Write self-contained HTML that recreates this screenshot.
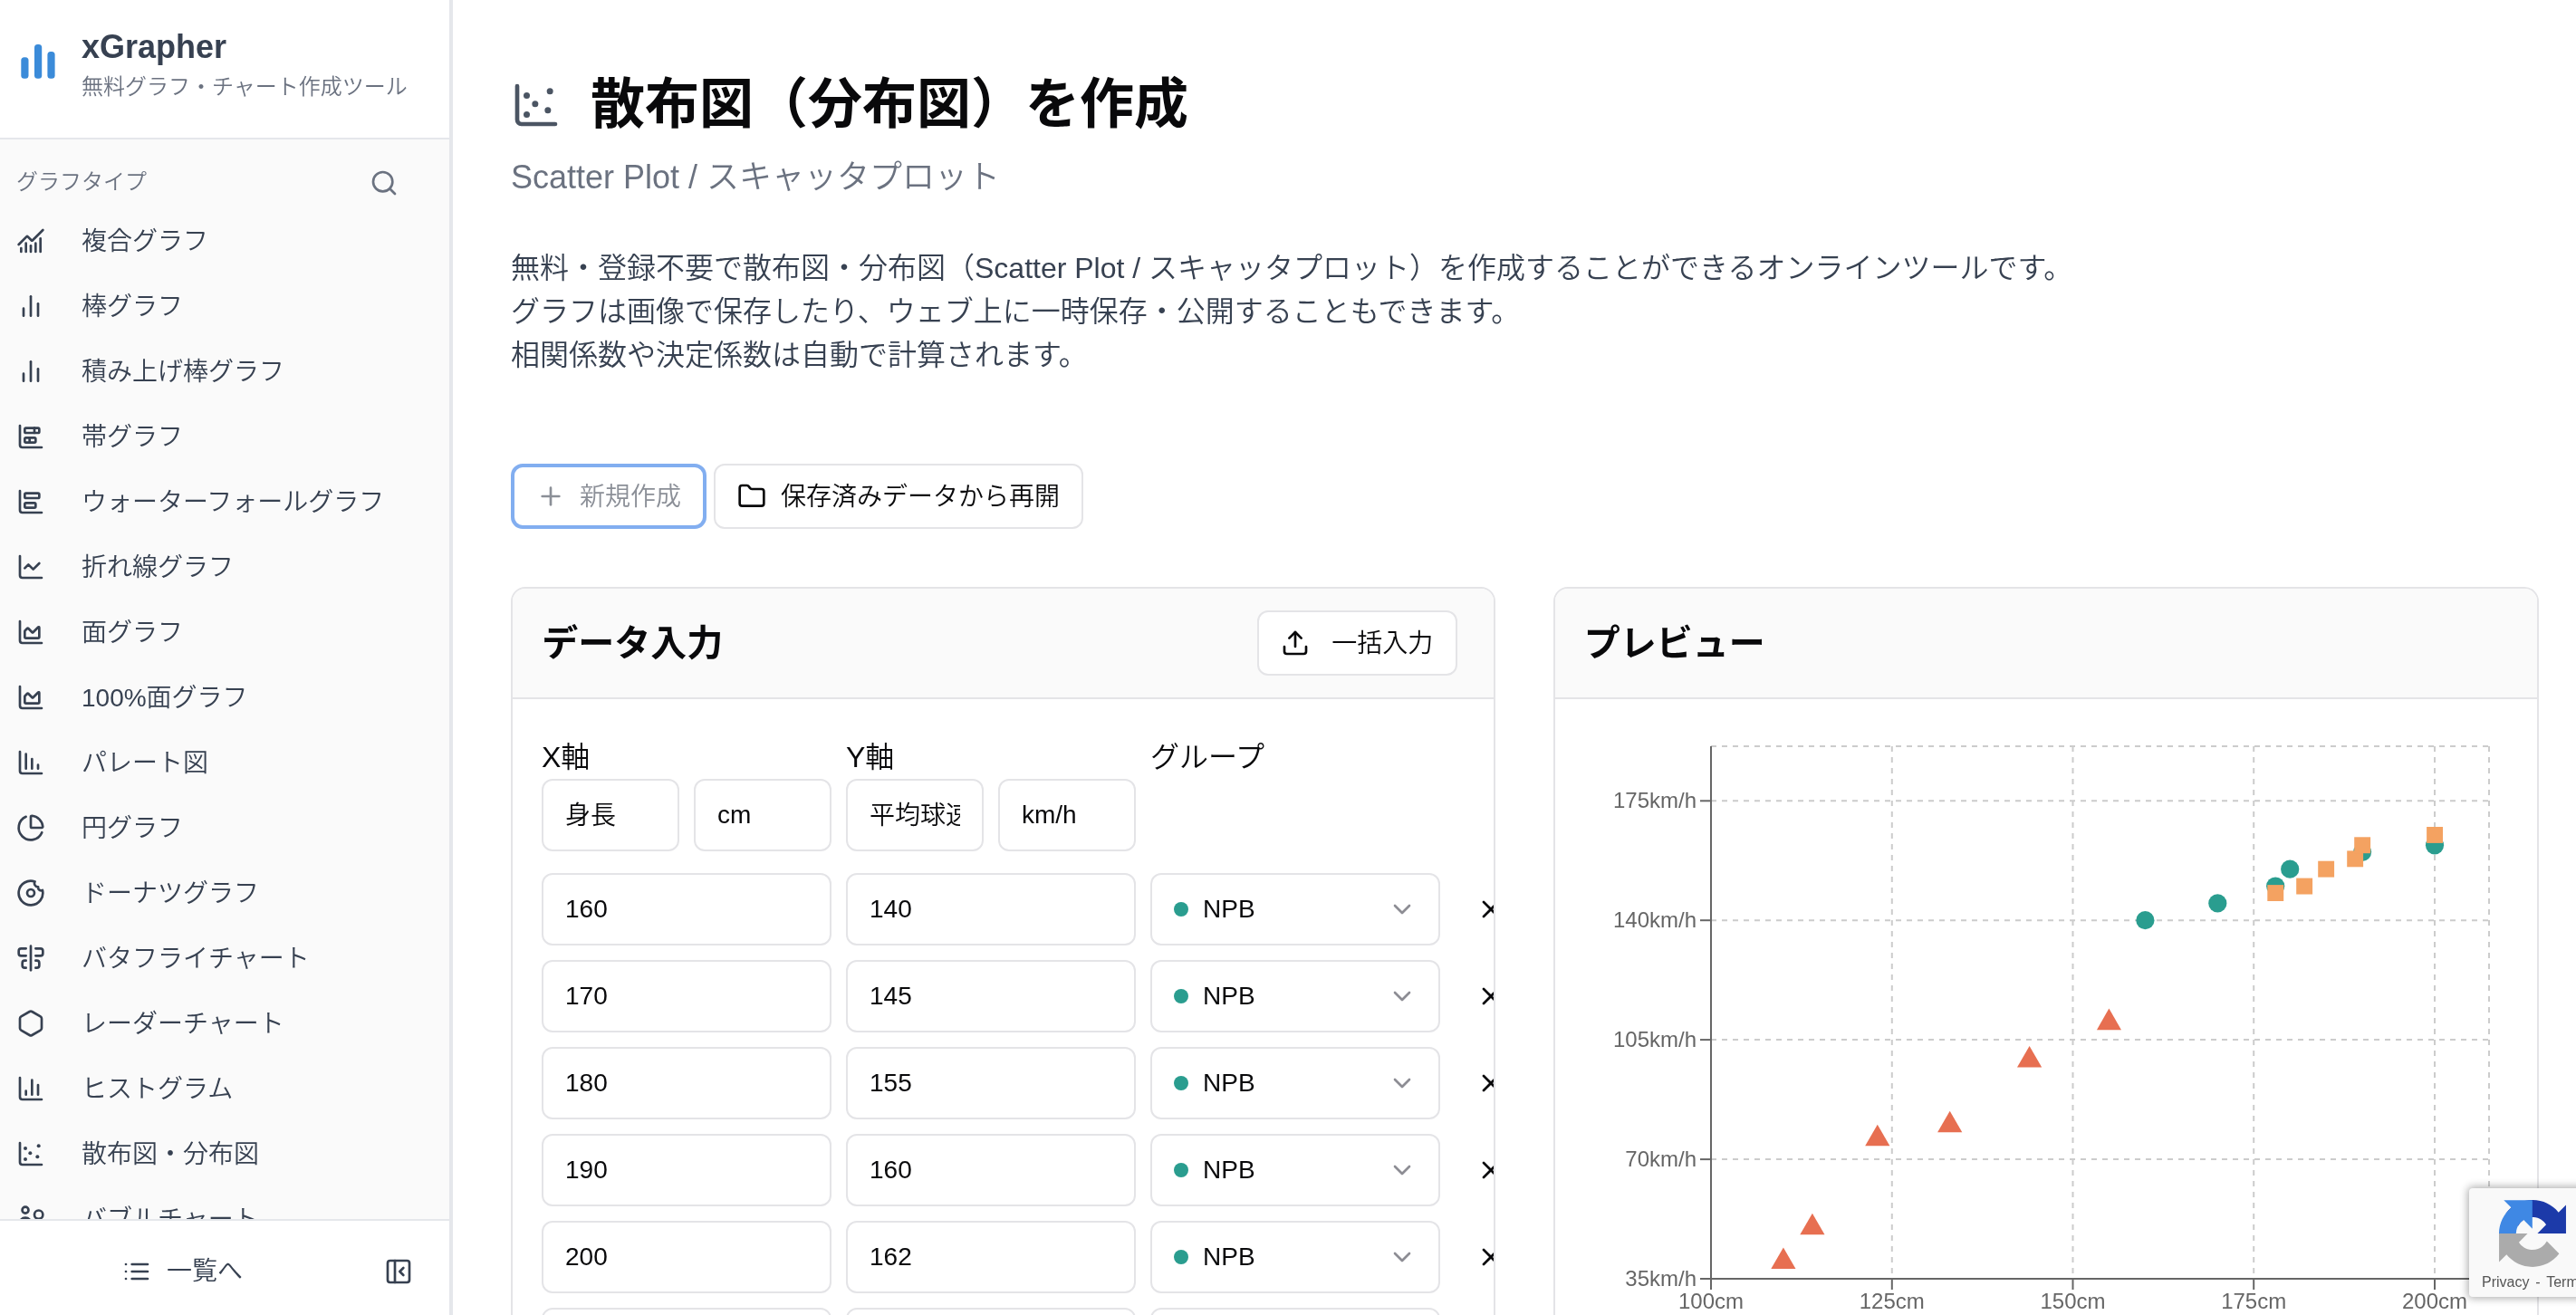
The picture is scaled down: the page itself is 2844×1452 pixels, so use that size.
<!DOCTYPE html>
<html lang="ja"><head><meta charset="utf-8"><title>散布図（分布図）を作成 | xGrapher</title>
<style>
*{box-sizing:border-box;margin:0;padding:0}
html,body{width:2844px;height:1452px;overflow:hidden;background:#fff}
body{font-family:"Liberation Sans","Noto Sans CJK JP",sans-serif;color:#09090b;font-weight:350}
#z{zoom:2;will-change:transform;opacity:.9999;position:relative;width:1422px;height:726px;overflow:hidden;background:#fff}
.ic{display:block;flex:none}
#side{position:absolute;left:0;top:0;width:250px;height:726px;border-right:2px solid #e5e7eb;background:#fafafa;overflow:hidden}
#shead{position:absolute;left:0;top:0;width:248px;height:77px;background:#fff;border-bottom:1px solid #e5e7eb}
#shead .t{position:absolute;left:45px;top:14px;font-size:18px;font-weight:700;color:#374151;line-height:24px;white-space:nowrap}
#shead .s{position:absolute;left:45px;top:40px;font-size:12px;color:#6b7280;line-height:16px;white-space:nowrap}
.glabel{position:absolute;left:9px;top:92.5px;font-size:12px;line-height:16px;color:#6b7280}
.nav{position:absolute;left:8px;width:232px;height:32px;display:flex;align-items:center;color:#374151;font-size:14px;white-space:nowrap}
.nav span{margin-left:20px}
.nav .ic{margin-left:1px;margin-top:2px}
#sfoot{position:absolute;left:0;top:673px;width:248px;height:53px;background:#fff;border-top:1px solid #e5e7eb;color:#374151;font-size:14px}
h1{position:absolute;left:326px;top:40px;font-size:30px;line-height:36px;font-weight:700;white-space:nowrap;color:#09090b}
.sub{position:absolute;left:282px;top:84px;font-size:18px;line-height:28px;color:#6b7280;white-space:nowrap}
.desc{position:absolute;left:282px;top:136px;font-size:16px;line-height:24px;color:#374151;white-space:nowrap}
.btn span{position:relative;top:-1px}
.btn{position:absolute;height:36px;border:1px solid #e4e4e7;border-radius:6px;background:#fff;display:flex;align-items:center;font-size:14px;white-space:nowrap}
.card{position:absolute;top:324px;height:420px;width:543.25px;border:1px solid #e4e4e7;border-radius:8px;background:#fff;overflow:hidden}
.chead{position:absolute;left:0;top:0;right:0;height:61px;background:#fafafa;border-bottom:1px solid #e4e4e7}
.chead b{position:absolute;left:16px;top:15px;font-size:20px;line-height:30px;font-weight:700;color:#09090b;white-space:nowrap}
.lab{position:absolute;top:406px;font-size:16px;line-height:24px;color:#09090b;white-space:nowrap}
.inp{position:absolute;top:0;height:40px;border:1px solid #e4e4e7;border-radius:6px;background:#fff;padding:0 12px;font-size:14px;line-height:38px;white-space:nowrap;overflow:hidden;color:#09090b}
.row{position:absolute;left:0;width:1422px;height:40px}
.sel{display:flex;align-items:center}
.dot{display:block;width:8px;height:8px;border-radius:50%;background:#2a9d8f;margin-right:8px;flex:none}
.xb{position:absolute;left:815px;top:12px;color:#09090b}
#clip{position:absolute;left:0;top:386px;width:824.4px;height:340px;overflow:hidden}
</style></head><body><div id="z">
<div id="side">
<div class="glabel">グラフタイプ</div>
<svg class="ic" width="16" height="16" viewBox="0 0 24 24" fill="none" stroke="currentColor" stroke-width="2" stroke-linecap="round" stroke-linejoin="round" style="position:absolute;left:204px;top:93px;color:#6b7280"><circle cx="11" cy="11" r="8"/><path d="m21 21-4.3-4.3"/></svg>
<a class="nav" style="top:116px"><svg class="ic" width="16" height="16" viewBox="0 0 24 24" fill="none" stroke="currentColor" stroke-width="2" stroke-linecap="round" stroke-linejoin="round" style=""><path d="M12 16v5"/><path d="M16 14v7"/><path d="M20 10v11"/><path d="m22 3-8.646 8.646a.5.5 0 0 1-.708 0L9.354 8.354a.5.5 0 0 0-.707 0L2 15"/><path d="M4 18v3"/><path d="M8 14v7"/></svg><span>複合グラフ</span></a>
<a class="nav" style="top:152px"><svg class="ic" width="16" height="16" viewBox="0 0 24 24" fill="none" stroke="currentColor" stroke-width="2" stroke-linecap="round" stroke-linejoin="round" style=""><path d="M18 20V10"/><path d="M12 20V4"/><path d="M6 20v-6"/></svg><span>棒グラフ</span></a>
<a class="nav" style="top:188px"><svg class="ic" width="16" height="16" viewBox="0 0 24 24" fill="none" stroke="currentColor" stroke-width="2" stroke-linecap="round" stroke-linejoin="round" style=""><path d="M18 20V10"/><path d="M12 20V4"/><path d="M6 20v-6"/></svg><span>積み上げ棒グラフ</span></a>
<a class="nav" style="top:224px"><svg class="ic" width="16" height="16" viewBox="0 0 24 24" fill="none" stroke="currentColor" stroke-width="2" stroke-linecap="round" stroke-linejoin="round" style=""><path d="M3 3v16a2 2 0 0 0 2 2h16"/><path d="M11 13v4"/><path d="M15 5v4"/><rect x="7" y="13" width="9" height="4" rx="1"/><rect x="7" y="5" width="12" height="4" rx="1"/></svg><span>帯グラフ</span></a>
<a class="nav" style="top:260px"><svg class="ic" width="16" height="16" viewBox="0 0 24 24" fill="none" stroke="currentColor" stroke-width="2" stroke-linecap="round" stroke-linejoin="round" style=""><path d="M3 3v16a2 2 0 0 0 2 2h16"/><rect x="7" y="13" width="9" height="4" rx="1"/><rect x="7" y="5" width="12" height="4" rx="1"/></svg><span>ウォーターフォールグラフ</span></a>
<a class="nav" style="top:296px"><svg class="ic" width="16" height="16" viewBox="0 0 24 24" fill="none" stroke="currentColor" stroke-width="2" stroke-linecap="round" stroke-linejoin="round" style=""><path d="M3 3v16a2 2 0 0 0 2 2h16"/><path d="m19 9-5 5-4-4-3 3"/></svg><span>折れ線グラフ</span></a>
<a class="nav" style="top:332px"><svg class="ic" width="16" height="16" viewBox="0 0 24 24" fill="none" stroke="currentColor" stroke-width="2" stroke-linecap="round" stroke-linejoin="round" style=""><path d="M3 3v16a2 2 0 0 0 2 2h16"/><path d="M7 11.207a.5.5 0 0 1 .146-.353l2-2a.5.5 0 0 1 .708 0l3.292 3.292a.5.5 0 0 0 .708 0l4.292-4.292a.5.5 0 0 1 .854.353V16a1 1 0 0 1-1 1H8a1 1 0 0 1-1-1z"/></svg><span>面グラフ</span></a>
<a class="nav" style="top:368px"><svg class="ic" width="16" height="16" viewBox="0 0 24 24" fill="none" stroke="currentColor" stroke-width="2" stroke-linecap="round" stroke-linejoin="round" style=""><path d="M3 3v16a2 2 0 0 0 2 2h16"/><path d="M7 11.207a.5.5 0 0 1 .146-.353l2-2a.5.5 0 0 1 .708 0l3.292 3.292a.5.5 0 0 0 .708 0l4.292-4.292a.5.5 0 0 1 .854.353V16a1 1 0 0 1-1 1H8a1 1 0 0 1-1-1z"/></svg><span>100%面グラフ</span></a>
<a class="nav" style="top:404px"><svg class="ic" width="16" height="16" viewBox="0 0 24 24" fill="none" stroke="currentColor" stroke-width="2" stroke-linecap="round" stroke-linejoin="round" style=""><path d="M3 3v16a2 2 0 0 0 2 2h16"/><path d="M13 17V9"/><path d="M18 17v-3"/><path d="M8 17V5"/></svg><span>パレート図</span></a>
<a class="nav" style="top:440px"><svg class="ic" width="16" height="16" viewBox="0 0 24 24" fill="none" stroke="currentColor" stroke-width="2" stroke-linecap="round" stroke-linejoin="round" style=""><path d="M21 12c.552 0 1.005-.449.95-.998a10 10 0 0 0-8.953-8.951c-.55-.055-.998.398-.998.95v8a1 1 0 0 0 1 1z"/><path d="M21.21 15.89A10 10 0 1 1 8 2.83"/></svg><span>円グラフ</span></a>
<a class="nav" style="top:476px"><svg class="ic" width="16" height="16" viewBox="0 0 24 24" fill="none" stroke="currentColor" stroke-width="2" stroke-linecap="round" stroke-linejoin="round" style=""><path d="M20.5 10a2.5 2.5 0 0 1-2.4-3H18a2.95 2.95 0 0 1-2.6-4.4 10 10 0 1 0 6.3 7.1c-.3.2-.8.3-1.2.3"/><circle cx="12" cy="12" r="3"/></svg><span>ドーナツグラフ</span></a>
<a class="nav" style="top:512px"><svg class="ic" width="16" height="16" viewBox="0 0 24 24" fill="none" stroke="currentColor" stroke-width="2" stroke-linecap="round" stroke-linejoin="round" style=""><path d="M12 2v20"/><path d="M8 10H4a2 2 0 0 1-2-2V6c0-1.1.9-2 2-2h4"/><path d="M16 10h4a2 2 0 0 0 2-2V6a2 2 0 0 0-2-2h-4"/><path d="M8 20H7a2 2 0 0 1-2-2v-2c0-1.1.9-2 2-2h1"/><path d="M16 14h1a2 2 0 0 1 2 2v2a2 2 0 0 1-2 2h-1"/></svg><span>バタフライチャート</span></a>
<a class="nav" style="top:548px"><svg class="ic" width="16" height="16" viewBox="0 0 24 24" fill="none" stroke="currentColor" stroke-width="2" stroke-linecap="round" stroke-linejoin="round" style=""><path d="M21 16V8a2 2 0 0 0-1-1.73l-7-4a2 2 0 0 0-2 0l-7 4A2 2 0 0 0 3 8v8a2 2 0 0 0 1 1.73l7 4a2 2 0 0 0 2 0l7-4A2 2 0 0 0 21 16z"/></svg><span>レーダーチャート</span></a>
<a class="nav" style="top:584px"><svg class="ic" width="16" height="16" viewBox="0 0 24 24" fill="none" stroke="currentColor" stroke-width="2" stroke-linecap="round" stroke-linejoin="round" style=""><path d="M3 3v16a2 2 0 0 0 2 2h16"/><path d="M18 17V9"/><path d="M13 17V5"/><path d="M8 17v-3"/></svg><span>ヒストグラム</span></a>
<a class="nav" style="top:620px"><svg class="ic" width="16" height="16" viewBox="0 0 24 24" fill="none" stroke="currentColor" stroke-width="2" stroke-linecap="round" stroke-linejoin="round" style=""><g fill="currentColor" stroke="none"><circle cx="7.5" cy="7.5" r="1.5"/><circle cx="18.5" cy="5.5" r="1.5"/><circle cx="11.5" cy="11.5" r="1.5"/><circle cx="7.5" cy="16.5" r="1.5"/><circle cx="17.5" cy="14.5" r="1.5"/></g><path d="M3 3v16a2 2 0 0 0 2 2h16"/></svg><span>散布図・分布図</span></a>
<a class="nav" style="top:656px"><svg class="ic" width="16" height="16" viewBox="0 0 24 24" fill="none" stroke="currentColor" stroke-width="2" stroke-linecap="round" stroke-linejoin="round" style=""><circle cx="7.5" cy="4.6" r="2.6"/><circle cx="18.5" cy="8.4" r="3.5"/><circle cx="7.5" cy="16" r="5"/></svg><span>バブルチャート</span></a>

<div id="shead">
<svg viewBox="0 0 80 100" style="position:absolute;left:0;top:0;width:40px;height:50px"><g fill="#3b8bd9"><rect x="23.3" y="63.3" width="8.2" height="23.4" rx="3.5"/><rect x="38" y="49.1" width="8.2" height="37.6" rx="3.5"/><rect x="52.4" y="56.9" width="8.2" height="29.8" rx="3.5"/></g></svg>
<div class="t">xGrapher</div><div class="s">無料グラフ・チャート作成ツール</div>
</div>
<div id="sfoot">
<svg class="ic" width="16" height="16" viewBox="0 0 24 24" fill="none" stroke="currentColor" stroke-width="2" stroke-linecap="round" stroke-linejoin="round" style="position:absolute;left:67.5px;top:20px"><path d="M3 12h.01"/><path d="M3 18h.01"/><path d="M3 6h.01"/><path d="M8 12h13"/><path d="M8 18h13"/><path d="M8 6h13"/></svg>
<span style="position:absolute;left:92px;top:18px;line-height:20px">一覧へ</span>
<svg class="ic" width="16" height="16" viewBox="0 0 24 24" fill="none" stroke="currentColor" stroke-width="2" stroke-linecap="round" stroke-linejoin="round" style="position:absolute;left:212px;top:20px"><rect width="18" height="18" x="3" y="3" rx="2"/><path d="M9 3v18"/><path d="m16 15-3-3 3-3"/></svg>
</div>
</div>
<svg class="ic" width="28" height="28" viewBox="0 0 24 24" fill="none" stroke="currentColor" stroke-width="2" stroke-linecap="round" stroke-linejoin="round" style="position:absolute;left:282px;top:44px;color:#4b5563"><g fill="currentColor" stroke="none"><circle cx="7.5" cy="7.5" r="1.5"/><circle cx="18.5" cy="5.5" r="1.5"/><circle cx="11.5" cy="11.5" r="1.5"/><circle cx="7.5" cy="16.5" r="1.5"/><circle cx="17.5" cy="14.5" r="1.5"/></g><path d="M3 3v16a2 2 0 0 0 2 2h16"/></svg>
<h1>散布図（分布図）を作成</h1>
<div class="sub">Scatter Plot / スキャッタプロット</div>
<div class="desc">無料・登録不要で散布図・分布図（Scatter Plot / スキャッタプロット）を作成することができるオンラインツールです。<br>グラフは画像で保存したり、ウェブ上に一時保存・公開することもできます。<br>相関係数や決定係数は自動で計算されます。</div>
<div class="btn" style="left:282px;top:256px;width:108px;border:2px solid #82aef0;border-radius:6.5px;color:#8b8f97;padding-left:12px"><svg class="ic" width="16" height="16" viewBox="0 0 24 24" fill="none" stroke="currentColor" stroke-width="2" stroke-linecap="round" stroke-linejoin="round" style=""><path d="M5 12h14"/><path d="M12 5v14"/></svg><span style="margin-left:8px">新規作成</span></div>
<div class="btn" style="left:394px;top:256px;width:204px;padding-left:12px;color:#09090b"><svg class="ic" width="16" height="16" viewBox="0 0 24 24" fill="none" stroke="currentColor" stroke-width="2" stroke-linecap="round" stroke-linejoin="round" style=""><path d="M20 20a2 2 0 0 0 2-2V8a2 2 0 0 0-2-2h-7.9a2 2 0 0 1-1.69-.9L9.6 3.9A2 2 0 0 0 7.93 3H4a2 2 0 0 0-2 2v13a2 2 0 0 0 2 2Z"/></svg><span style="margin-left:8px">保存済みデータから再開</span></div>

<div class="card" style="left:282.15px">
<div class="chead"><b>データ入力</b>
<div class="btn" style="left:411px;top:12px;width:110.5px;padding-left:12px"><svg class="ic" width="16" height="16" viewBox="0 0 24 24" fill="none" stroke="currentColor" stroke-width="2" stroke-linecap="round" stroke-linejoin="round" style=""><path d="M21 15v4a2 2 0 0 1-2 2H5a2 2 0 0 1-2-2v-4"/><polyline points="17 8 12 3 7 8"/><line x1="12" x2="12" y1="3" y2="15"/></svg><span style="margin-left:12px">一括入力</span></div>
</div>
</div>
<div id="clip">
<div class="lab" style="left:299px;top:20px">X軸</div><div class="lab" style="left:467px;top:20px">Y軸</div><div class="lab" style="left:635px;top:20px">グループ</div>
<div class="inp" style="left:299px;top:44px;width:76px"><span style="position:relative;top:.5px">身長</span></div>
<div class="inp" style="left:383px;top:44px;width:76px">cm</div>
<div class="inp" style="left:467px;top:44px;width:76px"><span style="display:block;width:50px;overflow:hidden;position:relative;top:.5px">平均球速</span></div>
<div class="inp" style="left:551px;top:44px;width:76px">km/h</div>
<div class="row" style="top:96px">
<div class="inp" style="left:299px;width:160px">160</div>
<div class="inp" style="left:467px;width:160px">140</div>
<div class="inp sel" style="left:635px;width:160px"><i class="dot"></i><span>NPB</span><svg class="ic" width="16" height="16" viewBox="0 0 24 24" fill="none" stroke="currentColor" stroke-width="2" stroke-linecap="round" stroke-linejoin="round" style="margin-left:auto;color:#71717a;opacity:.8"><path d="m6 9 6 6 6-6"/></svg></div>
<div class="xb"><svg class="ic" width="16" height="16" viewBox="0 0 24 24" fill="none" stroke="currentColor" stroke-width="2" stroke-linecap="round" stroke-linejoin="round" style=""><path d="M18 6 6 18"/><path d="m6 6 12 12"/></svg></div>
</div>
<div class="row" style="top:144px">
<div class="inp" style="left:299px;width:160px">170</div>
<div class="inp" style="left:467px;width:160px">145</div>
<div class="inp sel" style="left:635px;width:160px"><i class="dot"></i><span>NPB</span><svg class="ic" width="16" height="16" viewBox="0 0 24 24" fill="none" stroke="currentColor" stroke-width="2" stroke-linecap="round" stroke-linejoin="round" style="margin-left:auto;color:#71717a;opacity:.8"><path d="m6 9 6 6 6-6"/></svg></div>
<div class="xb"><svg class="ic" width="16" height="16" viewBox="0 0 24 24" fill="none" stroke="currentColor" stroke-width="2" stroke-linecap="round" stroke-linejoin="round" style=""><path d="M18 6 6 18"/><path d="m6 6 12 12"/></svg></div>
</div>
<div class="row" style="top:192px">
<div class="inp" style="left:299px;width:160px">180</div>
<div class="inp" style="left:467px;width:160px">155</div>
<div class="inp sel" style="left:635px;width:160px"><i class="dot"></i><span>NPB</span><svg class="ic" width="16" height="16" viewBox="0 0 24 24" fill="none" stroke="currentColor" stroke-width="2" stroke-linecap="round" stroke-linejoin="round" style="margin-left:auto;color:#71717a;opacity:.8"><path d="m6 9 6 6 6-6"/></svg></div>
<div class="xb"><svg class="ic" width="16" height="16" viewBox="0 0 24 24" fill="none" stroke="currentColor" stroke-width="2" stroke-linecap="round" stroke-linejoin="round" style=""><path d="M18 6 6 18"/><path d="m6 6 12 12"/></svg></div>
</div>
<div class="row" style="top:240px">
<div class="inp" style="left:299px;width:160px">190</div>
<div class="inp" style="left:467px;width:160px">160</div>
<div class="inp sel" style="left:635px;width:160px"><i class="dot"></i><span>NPB</span><svg class="ic" width="16" height="16" viewBox="0 0 24 24" fill="none" stroke="currentColor" stroke-width="2" stroke-linecap="round" stroke-linejoin="round" style="margin-left:auto;color:#71717a;opacity:.8"><path d="m6 9 6 6 6-6"/></svg></div>
<div class="xb"><svg class="ic" width="16" height="16" viewBox="0 0 24 24" fill="none" stroke="currentColor" stroke-width="2" stroke-linecap="round" stroke-linejoin="round" style=""><path d="M18 6 6 18"/><path d="m6 6 12 12"/></svg></div>
</div>
<div class="row" style="top:288px">
<div class="inp" style="left:299px;width:160px">200</div>
<div class="inp" style="left:467px;width:160px">162</div>
<div class="inp sel" style="left:635px;width:160px"><i class="dot"></i><span>NPB</span><svg class="ic" width="16" height="16" viewBox="0 0 24 24" fill="none" stroke="currentColor" stroke-width="2" stroke-linecap="round" stroke-linejoin="round" style="margin-left:auto;color:#71717a;opacity:.8"><path d="m6 9 6 6 6-6"/></svg></div>
<div class="xb"><svg class="ic" width="16" height="16" viewBox="0 0 24 24" fill="none" stroke="currentColor" stroke-width="2" stroke-linecap="round" stroke-linejoin="round" style=""><path d="M18 6 6 18"/><path d="m6 6 12 12"/></svg></div>
</div>
<div class="row" style="top:336px">
<div class="inp" style="left:299px;width:160px">178</div>
<div class="inp" style="left:467px;width:160px">150</div>
<div class="inp sel" style="left:635px;width:160px"><i class="dot"></i><span>NPB</span><svg class="ic" width="16" height="16" viewBox="0 0 24 24" fill="none" stroke="currentColor" stroke-width="2" stroke-linecap="round" stroke-linejoin="round" style="margin-left:auto;color:#71717a;opacity:.8"><path d="m6 9 6 6 6-6"/></svg></div>
<div class="xb"><svg class="ic" width="16" height="16" viewBox="0 0 24 24" fill="none" stroke="currentColor" stroke-width="2" stroke-linecap="round" stroke-linejoin="round" style=""><path d="M18 6 6 18"/><path d="m6 6 12 12"/></svg></div>
</div>

</div>

<div class="card" style="left:857.4px;width:544px">
<div class="chead"><b>プレビュー</b></div>
</div>
<svg class="chart" viewBox="1717 772 1083 680" style="position:absolute;left:858.5px;top:386px;width:541.5px;height:340px"><g stroke="#ccc" stroke-width="2" stroke-dasharray="6 6" fill="none"><line x1="1889.0" y1="824.0" x2="2748.0" y2="824.0"/><line x1="1889.0" y1="884.3" x2="2748.0" y2="884.3"/><line x1="1889.0" y1="1016.2" x2="2748.0" y2="1016.2"/><line x1="1889.0" y1="1148.1" x2="2748.0" y2="1148.1"/><line x1="1889.0" y1="1280.1" x2="2748.0" y2="1280.1"/><line x1="1889.0" y1="1412.0" x2="2748.0" y2="1412.0"/><line x1="1889.0" y1="824.0" x2="1889.0" y2="1412.0"/><line x1="2088.8" y1="824.0" x2="2088.8" y2="1412.0"/><line x1="2288.5" y1="824.0" x2="2288.5" y2="1412.0"/><line x1="2488.2" y1="824.0" x2="2488.2" y2="1412.0"/><line x1="2688.0" y1="824.0" x2="2688.0" y2="1412.0"/><line x1="2748.0" y1="824.0" x2="2748.0" y2="1412.0"/></g><g stroke="#666" stroke-width="2" fill="none"><line x1="1889.0" y1="1412.0" x2="2748.0" y2="1412.0"/><line x1="1889.0" y1="824.0" x2="1889.0" y2="1412.0"/><line x1="1889.0" y1="1412.0" x2="1889.0" y2="1424.0"/><line x1="2088.8" y1="1412.0" x2="2088.8" y2="1424.0"/><line x1="2288.5" y1="1412.0" x2="2288.5" y2="1424.0"/><line x1="2488.2" y1="1412.0" x2="2488.2" y2="1424.0"/><line x1="2688.0" y1="1412.0" x2="2688.0" y2="1424.0"/><line x1="1877.0" y1="1412.0" x2="1889.0" y2="1412.0"/><line x1="1877.0" y1="1280.1" x2="1889.0" y2="1280.1"/><line x1="1877.0" y1="1148.1" x2="1889.0" y2="1148.1"/><line x1="1877.0" y1="1016.2" x2="1889.0" y2="1016.2"/><line x1="1877.0" y1="884.3" x2="1889.0" y2="884.3"/></g><g fill="#666" font-size="24" font-family="Liberation Sans, sans-serif"><text x="1889.0" y="1445.0" text-anchor="middle">100cm</text><text x="2088.8" y="1445.0" text-anchor="middle">125cm</text><text x="2288.5" y="1445.0" text-anchor="middle">150cm</text><text x="2488.2" y="1445.0" text-anchor="middle">175cm</text><text x="2688.0" y="1445.0" text-anchor="middle">200cm</text><text x="1873.0" y="1419.7" text-anchor="end">35km/h</text><text x="1873.0" y="1287.8" text-anchor="end">70km/h</text><text x="1873.0" y="1155.8" text-anchor="end">105km/h</text><text x="1873.0" y="1023.9" text-anchor="end">140km/h</text><text x="1873.0" y="892.0" text-anchor="end">175km/h</text></g><circle cx="2368.4" cy="1016.2" r="10.1" fill="#2a9d8f"/><circle cx="2448.3" cy="997.4" r="10.1" fill="#2a9d8f"/><circle cx="2528.2" cy="959.7" r="10.1" fill="#2a9d8f"/><circle cx="2608.1" cy="940.8" r="10.1" fill="#2a9d8f"/><circle cx="2688.0" cy="933.3" r="10.1" fill="#2a9d8f"/><circle cx="2512.2" cy="978.5" r="10.1" fill="#2a9d8f"/><rect x="2503.3" y="977.1" width="17.9" height="17.9" fill="#f4a261"/><rect x="2535.2" y="969.6" width="17.9" height="17.9" fill="#f4a261"/><rect x="2559.2" y="950.7" width="17.9" height="17.9" fill="#f4a261"/><rect x="2591.2" y="939.4" width="17.9" height="17.9" fill="#f4a261"/><rect x="2599.2" y="924.3" width="17.9" height="17.9" fill="#f4a261"/><rect x="2679.1" y="913.0" width="17.9" height="17.9" fill="#f4a261"/><path d="M1968.9,1377.5L1982.5,1401.0L1955.3,1401.0Z" fill="#e76f51"/><path d="M2000.9,1339.8L2014.5,1363.3L1987.3,1363.3Z" fill="#e76f51"/><path d="M2072.8,1241.8L2086.4,1265.3L2059.2,1265.3Z" fill="#e76f51"/><path d="M2152.7,1226.7L2166.3,1250.2L2139.1,1250.2Z" fill="#e76f51"/><path d="M2240.6,1155.1L2254.2,1178.6L2227.0,1178.6Z" fill="#e76f51"/><path d="M2328.4,1113.6L2342.0,1137.2L2314.9,1137.2Z" fill="#e76f51"/></svg>
<div id="rc" style="position:absolute;left:1363px;top:656px;width:70px;height:60px;background:#f9f9f9;border-radius:2px;box-shadow:0 0 4px 1px rgba(0,0,0,.3)">
<svg viewBox="0 0 64 64" style="position:absolute;left:16.5px;top:6.5px;width:37px;height:37px">
<path d="M64 31.955l-.033-1.370V4.687l-7.160 7.160C50.948 4.674 42.033.093 32.050.093c-10.400 0-19.622 4.960-25.458 12.640l11.736 11.860a15.550 15.550 0 0 1 4.754-5.334c2.050-1.600 4.952-2.906 8.968-2.906.485 0 .860.057 1.135.163 4.976.393 9.288 3.140 11.828 7.124l-8.307 8.307L64 31.953" fill="#1c3aa9"/>
<path d="M31.862.094l-1.370.033H4.594l7.160 7.160C4.580 13.147 0 22.060 0 32.046c0 10.400 4.960 19.622 12.640 25.458L24.500 45.768a15.550 15.550 0 0 1-5.334-4.754c-1.600-2.050-2.906-4.952-2.906-8.968 0-.485.057-.860.163-1.135.393-4.976 3.140-9.288 7.124-11.828l8.307 8.307L31.860.095" fill="#3f88e4" clip-path="url(#rcb)"/><clipPath id="rcb"><rect x="0" y="0" width="33" height="32.1"/></clipPath>
<path d="M.001 32.045l.033 1.370v25.898l7.160-7.160c5.860 7.173 14.774 11.754 24.760 11.754 10.400 0 19.622-4.960 25.458-12.640l-11.736-11.860a15.550 15.550 0 0 1-4.754 5.334c-2.050 1.600-4.952 2.906-8.968 2.906-.485 0-.860-.057-1.135-.163-4.976-.393-9.288-3.140-11.828-7.124l8.307-8.307c-10.522.04-22.400.066-27.295-.005" fill="#ababab"/>
</svg>
<div style="position:absolute;left:7px;top:47px;font-size:8px;line-height:10px;color:#555;white-space:nowrap;word-spacing:1.2px;font-family:'Liberation Sans',sans-serif">Privacy - Terms</div>
</div>
</div></body></html>
